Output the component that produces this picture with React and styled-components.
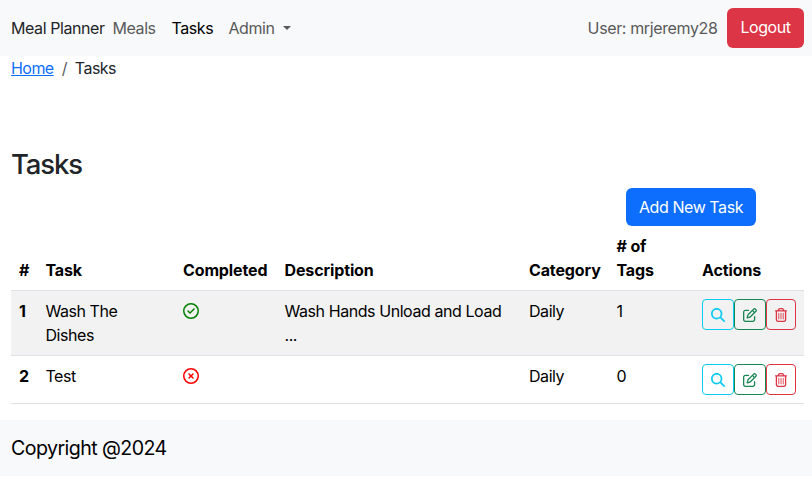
import React from "react";
import styled, { createGlobalStyle } from "styled-components";
import {
  FaMagnifyingGlass,
  FaRegPenToSquare,
  FaRegTrashCan,
  FaRegCircleCheck,
  FaRegCircleXmark,
} from "react-icons/fa6";

const GlobalStyle = createGlobalStyle`
  * { box-sizing: border-box; }
  body {
    margin: 0;
    background: #fff;
    color: #212529;
    font-family: Inter, "Liberation Sans", sans-serif;
    font-size: 16px;
    line-height: 24px;
    letter-spacing: -0.43px;
  }
`;

const Navbar = styled.nav`
  display: flex;
  align-items: center;
  height: 56px;
  padding: 0 8px 0 11px;
  background: #f8f9fa;
`;

const Brand = styled.span`
  width: 93.5px;
  white-space: nowrap;
  margin-right: 8px;
`;

const NavLink = styled.a`
  display: flex;
  align-items: center;
  width: ${(p) => p.$width};
  white-space: nowrap;
  color: ${(p) => (p.$active ? "#000" : "#59595a")};
`;

const Caret = styled.span`
  margin-left: 8px;
  border-top: 4px solid currentColor;
  border-left: 4px solid transparent;
  border-right: 4px solid transparent;
`;

const UserName = styled.span`
  margin-left: auto;
  margin-right: 9.5px;
  color: #59595a;
  letter-spacing: -0.37px;
`;

const Button = styled.button`
  display: flex;
  align-items: center;
  justify-content: center;
  width: ${(p) => p.$width};
  height: ${(p) => p.$height};
  padding: 0 0 ${(p) => p.$lift || "0"};
  border: 0;
  border-radius: 6px;
  background: ${(p) => p.$color};
  color: #fff;
  font: inherit;
  letter-spacing: inherit;
`;

const Content = styled.main`
  padding: 0 8px 16px 11px;
`;

const Breadcrumb = styled.div`
  display: flex;
  gap: 8px;
  height: 24px;
  letter-spacing: -0.55px;
`;

const HomeLink = styled.a`
  color: #0d6efd;
  text-decoration: underline;
`;

const Slash = styled.span`
  color: #595c5f;
`;

const Title = styled.h3`
  margin: 67px 0 7px;
  font-size: 27.5px;
  line-height: 34px;
  font-weight: 500;
  letter-spacing: -1.1px;
`;

const Toolbar = styled.div`
  display: flex;
  justify-content: flex-end;
  padding-right: 48px;
`;

const Table = styled.table`
  width: 100%;
  table-layout: fixed;
  border-collapse: separate;
  border-spacing: 0;
  color: #000;
`;

const Col = styled.col`
  width: ${(p) => p.$width};
`;

const Head = styled.th`
  padding: 8px 0 8px 8px;
  border-bottom: 1px solid #dee2e6;
  text-align: left;
  vertical-align: bottom;
  font-weight: 700;
  letter-spacing: -0.12px;
`;

const Row = styled.tr`
  background: ${(p) => (p.$striped ? "#f2f2f2" : "#fff")};
`;

const Cell = styled.td`
  padding: 8px 0 8px 8px;
  border-bottom: 1px solid #dee2e6;
  vertical-align: top;
  font-weight: ${(p) => (p.$strong ? 700 : 400)};
`;

const Status = styled.span`
  display: flex;
  align-items: center;
  height: 24px;
  font-size: 16px;
  color: ${(p) => (p.$done ? "green" : "red")};
`;

const Actions = styled.div`
  display: flex;
`;

const IconButton = styled.button`
  display: flex;
  align-items: center;
  justify-content: center;
  width: ${(p) => p.$width || "32px"};
  height: 31px;
  padding: 0;
  border: 1px solid ${(p) => p.$color};
  border-radius: 4px;
  background: transparent;
  color: ${(p) => p.$color};
  font-size: 14px;
`;

const Footer = styled.footer`
  height: 56px;
  padding: 0 11px;
  background: #f8f9fa;
  color: #000;
  font-size: 19.6px;
  line-height: 56px;
  letter-spacing: -0.57px;
`;

const columns = [
  ["#", "26.4px"],
  ["Task", "137.6px"],
  ["Completed", "101.5px"],
  ["Description", "244.5px"],
  ["Category", "87.5px"],
  [<># of<br />Tags</>, "85.5px"],
  ["Actions", "110px"],
];

const tasks = [
  { id: 1, name: <>Wash The<br />Dishes</>, done: true, description: <>Wash Hands Unload and Load<br />...</>, category: "Daily", tags: 1 },
  { id: 2, name: "Test", done: false, description: "", category: "Daily", tags: 0 },
];

export default function App() {
  return (
    <>
      <GlobalStyle />
      <Navbar>
        <Brand>Meal Planner</Brand>
        <NavLink $width="59px">Meals</NavLink>
        <NavLink $width="57px" $active>Tasks</NavLink>
        <NavLink>Admin<Caret /></NavLink>
        <UserName>User: mrjeremy28</UserName>
        <Button $width="77px" $height="40px" $color="#dc3545" $lift="2px">Logout</Button>
      </Navbar>
      <Content>
        <Breadcrumb>
          <HomeLink>Home</HomeLink>
          <Slash>/</Slash>
          <span>Tasks</span>
        </Breadcrumb>
        <Title>Tasks</Title>
        <Toolbar>
          <Button $width="130px" $height="38px" $color="#0d6efd">Add New Task</Button>
        </Toolbar>
        <Table>
          <colgroup>
            {columns.map(([, width], i) => <Col key={i} $width={width} />)}
          </colgroup>
          <thead>
            <tr>{columns.map(([label], i) => <Head key={i}>{label}</Head>)}</tr>
          </thead>
          <tbody>
            {tasks.map((task, i) => (
              <Row key={task.id} $striped={i % 2 === 0}>
                <Cell $strong>{task.id}</Cell>
                <Cell>{task.name}</Cell>
                <Cell>
                  <Status $done={task.done}>
                    {task.done ? <FaRegCircleCheck /> : <FaRegCircleXmark />}
                  </Status>
                </Cell>
                <Cell>{task.description}</Cell>
                <Cell>{task.category}</Cell>
                <Cell>{task.tags}</Cell>
                <Cell>
                  <Actions>
                    <IconButton $color="#0dcaf0"><FaMagnifyingGlass /></IconButton>
                    <IconButton $color="#198754"><FaRegPenToSquare /></IconButton>
                    <IconButton $color="#dc3545" $width="30px"><FaRegTrashCan /></IconButton>
                  </Actions>
                </Cell>
              </Row>
            ))}
          </tbody>
        </Table>
      </Content>
      <Footer>Copyright @2024</Footer>
    </>
  );
}
